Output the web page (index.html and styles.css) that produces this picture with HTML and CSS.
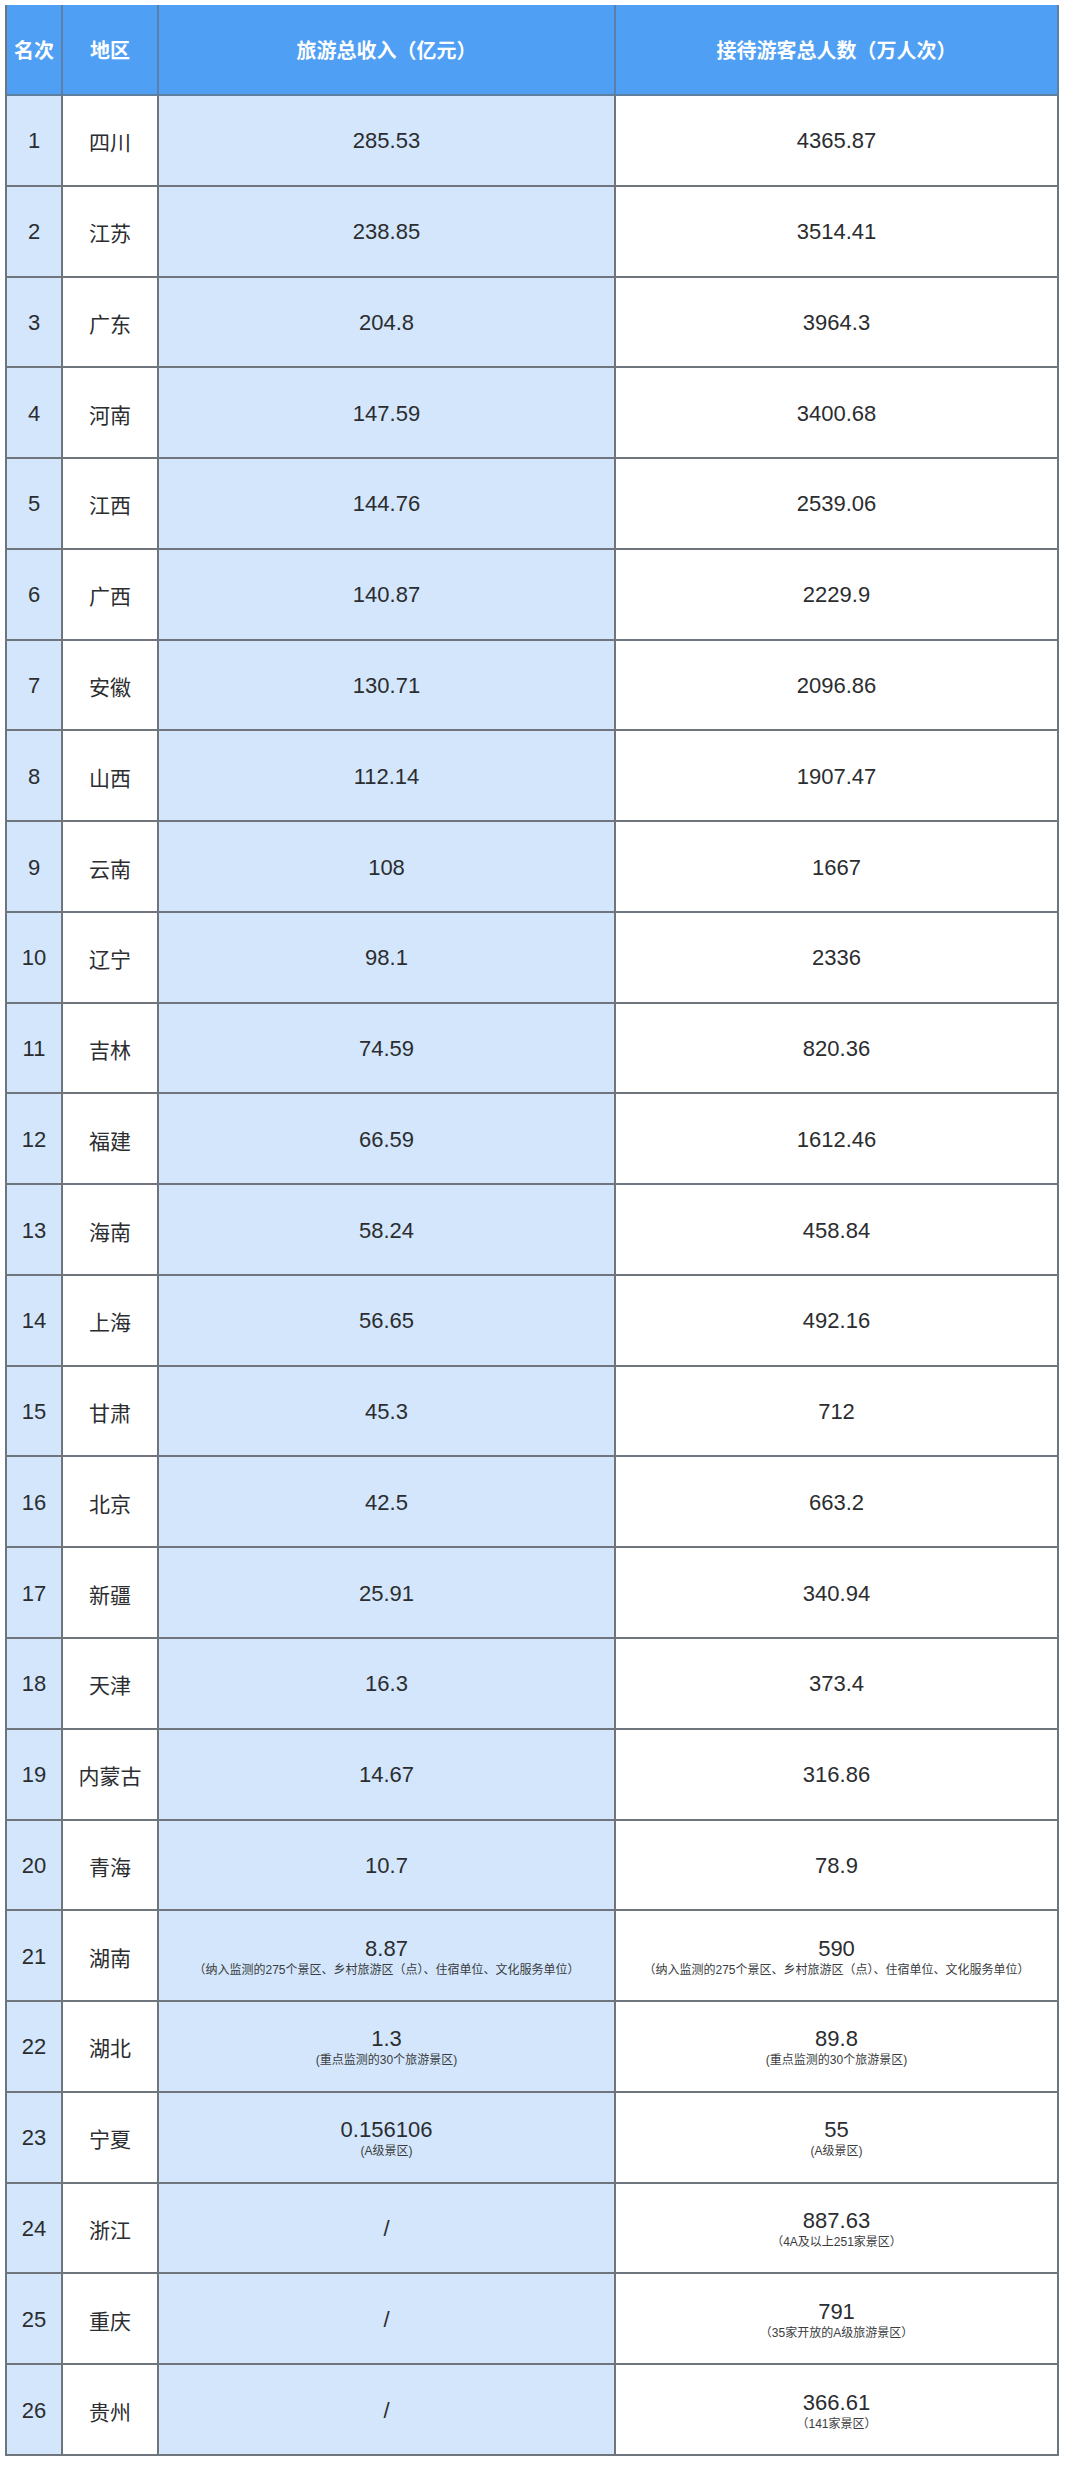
FILE: index.html
```html
<!DOCTYPE html>
<html lang="zh-CN">
<head>
<meta charset="utf-8">
<title>旅游收入排名</title>
<link rel="stylesheet" href="styles.css">
</head>
<body>
<div class="sheet">
  <div class="grid">
    <div class="hd c1">名次</div>
    <div class="hd c2">地区</div>
    <div class="hd c3">旅游总收入（亿元）</div>
    <div class="hd c4">接待游客总人数（万人次）</div>

    <div class="cell c1 rank">1</div><div class="cell c2">四川</div><div class="cell c3"><span class="num">285.53</span></div><div class="cell c4"><span class="num">4365.87</span></div>
    <div class="cell c1 rank">2</div><div class="cell c2">江苏</div><div class="cell c3"><span class="num">238.85</span></div><div class="cell c4"><span class="num">3514.41</span></div>
    <div class="cell c1 rank">3</div><div class="cell c2">广东</div><div class="cell c3"><span class="num">204.8</span></div><div class="cell c4"><span class="num">3964.3</span></div>
    <div class="cell c1 rank">4</div><div class="cell c2">河南</div><div class="cell c3"><span class="num">147.59</span></div><div class="cell c4"><span class="num">3400.68</span></div>
    <div class="cell c1 rank">5</div><div class="cell c2">江西</div><div class="cell c3"><span class="num">144.76</span></div><div class="cell c4"><span class="num">2539.06</span></div>
    <div class="cell c1 rank">6</div><div class="cell c2">广西</div><div class="cell c3"><span class="num">140.87</span></div><div class="cell c4"><span class="num">2229.9</span></div>
    <div class="cell c1 rank">7</div><div class="cell c2">安徽</div><div class="cell c3"><span class="num">130.71</span></div><div class="cell c4"><span class="num">2096.86</span></div>
    <div class="cell c1 rank">8</div><div class="cell c2">山西</div><div class="cell c3"><span class="num">112.14</span></div><div class="cell c4"><span class="num">1907.47</span></div>
    <div class="cell c1 rank">9</div><div class="cell c2">云南</div><div class="cell c3"><span class="num">108</span></div><div class="cell c4"><span class="num">1667</span></div>
    <div class="cell c1 rank">10</div><div class="cell c2">辽宁</div><div class="cell c3"><span class="num">98.1</span></div><div class="cell c4"><span class="num">2336</span></div>
    <div class="cell c1 rank">11</div><div class="cell c2">吉林</div><div class="cell c3"><span class="num">74.59</span></div><div class="cell c4"><span class="num">820.36</span></div>
    <div class="cell c1 rank">12</div><div class="cell c2">福建</div><div class="cell c3"><span class="num">66.59</span></div><div class="cell c4"><span class="num">1612.46</span></div>
    <div class="cell c1 rank">13</div><div class="cell c2">海南</div><div class="cell c3"><span class="num">58.24</span></div><div class="cell c4"><span class="num">458.84</span></div>
    <div class="cell c1 rank">14</div><div class="cell c2">上海</div><div class="cell c3"><span class="num">56.65</span></div><div class="cell c4"><span class="num">492.16</span></div>
    <div class="cell c1 rank">15</div><div class="cell c2">甘肃</div><div class="cell c3"><span class="num">45.3</span></div><div class="cell c4"><span class="num">712</span></div>
    <div class="cell c1 rank">16</div><div class="cell c2">北京</div><div class="cell c3"><span class="num">42.5</span></div><div class="cell c4"><span class="num">663.2</span></div>
    <div class="cell c1 rank">17</div><div class="cell c2">新疆</div><div class="cell c3"><span class="num">25.91</span></div><div class="cell c4"><span class="num">340.94</span></div>
    <div class="cell c1 rank">18</div><div class="cell c2">天津</div><div class="cell c3"><span class="num">16.3</span></div><div class="cell c4"><span class="num">373.4</span></div>
    <div class="cell c1 rank">19</div><div class="cell c2">内蒙古</div><div class="cell c3"><span class="num">14.67</span></div><div class="cell c4"><span class="num">316.86</span></div>
    <div class="cell c1 rank">20</div><div class="cell c2">青海</div><div class="cell c3"><span class="num">10.7</span></div><div class="cell c4"><span class="num">78.9</span></div>
    <div class="cell c1 rank">21</div><div class="cell c2">湖南</div><div class="cell c3"><span class="num">8.87</span><span class="note">（纳入监测的275个景区、乡村旅游区（点）、住宿单位、文化服务单位）</span></div><div class="cell c4"><span class="num">590</span><span class="note">（纳入监测的275个景区、乡村旅游区（点）、住宿单位、文化服务单位）</span></div>
    <div class="cell c1 rank">22</div><div class="cell c2">湖北</div><div class="cell c3"><span class="num">1.3</span><span class="note">(重点监测的30个旅游景区)</span></div><div class="cell c4"><span class="num">89.8</span><span class="note">(重点监测的30个旅游景区)</span></div>
    <div class="cell c1 rank">23</div><div class="cell c2">宁夏</div><div class="cell c3"><span class="num">0.156106</span><span class="note">(A级景区)</span></div><div class="cell c4"><span class="num">55</span><span class="note">(A级景区)</span></div>
    <div class="cell c1 rank">24</div><div class="cell c2">浙江</div><div class="cell c3"><span class="num">/</span></div><div class="cell c4"><span class="num">887.63</span><span class="note">（4A及以上251家景区）</span></div>
    <div class="cell c1 rank">25</div><div class="cell c2">重庆</div><div class="cell c3"><span class="num">/</span></div><div class="cell c4"><span class="num">791</span><span class="note">（35家开放的A级旅游景区）</span></div>
    <div class="cell c1 rank">26</div><div class="cell c2">贵州</div><div class="cell c3"><span class="num">/</span></div><div class="cell c4"><span class="num">366.61</span><span class="note">（141家景区）</span></div>
  </div>
</div>
</body>
</html>
```

FILE: styles.css
```css
* { box-sizing: border-box; }
html, body {
  margin: 0;
  padding: 0;
  background: #ffffff;
}
body {
  font-family: "Liberation Sans", "Noto Sans CJK SC", sans-serif;
  color: #2b2d30;
}
.sheet {
  padding: 5px 0 0 5px;
}
.grid {
  display: grid;
  grid-template-columns: 56px 96px 457px 443px;
  grid-template-rows: 91px;
  grid-auto-rows: 90.77px;
  width: 1052px;
  border-left: 2px solid #6f757c;
  border-top: 0;
}
.hd {
  background: #4fa0f4;
  color: #ffffff;
  font-weight: bold;
  font-size: 20px;
  display: flex;
  align-items: center;
  justify-content: center;
  border-right: 2px solid #5d7fa6;
  border-bottom: 2px solid #5f7f9f;
  white-space: nowrap;
}
.hd.c1 { letter-spacing: 0; }
.cell {
  display: flex;
  flex-direction: column;
  align-items: center;
  justify-content: center;
  border-right: 2px solid #6f757c;
  border-bottom: 2px solid #6f757c;
  font-size: 21px;
  padding-top: 2px;
}
.c1, .c3 { background: #d3e6fb; }
.c2, .c4 { background: #ffffff; }
.hd.c1, .hd.c2, .hd.c3, .hd.c4 { background: #4fa0f4; }
.rank { font-size: 22px; }
.num {
  font-size: 22px;
  line-height: 26px;
}
.note {
  font-size: 12px;
  line-height: 16px;
  color: #3a3c40;
  white-space: nowrap;
}
```
